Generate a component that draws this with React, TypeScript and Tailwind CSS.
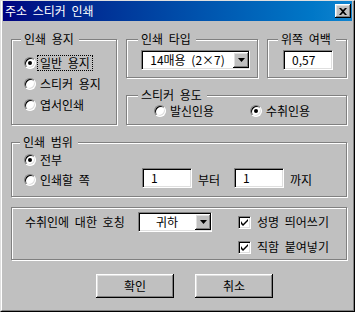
import type { ReactNode } from "react";

const raised =
  "bg-[#c0c0c0] shadow-[inset_-1px_-1px_0_#000,inset_1px_1px_0_#fff,inset_-2px_-2px_0_#808080,inset_2px_2px_0_#dfdfdf]";
const sunken =
  "bg-white border border-t-[#808080] border-l-[#808080] border-r-white border-b-white shadow-[inset_1px_1px_0_#000,inset_-1px_-1px_0_#dfdfdf]";

function Group({
  label,
  labelPos = "left-[10px]",
  className = "",
  children,
}: {
  label?: string;
  labelPos?: string;
  className?: string;
  children?: ReactNode;
}) {
  return (
    <div
      className={`relative border border-[#808080] shadow-[inset_1px_1px_0_#fff,1px_1px_0_#fff] ${className}`}
    >
      {label && (
        <span className={`absolute top-[-8px] bg-[#c0c0c0] pl-[3px] pr-[5px] leading-[14px] ${labelPos}`}>
          {label}
        </span>
      )}
      {children}
    </div>
  );
}

function Radio({ checked = false }: { checked?: boolean }) {
  return (
    <span
      className={`flex items-center justify-center w-3 h-3 shrink-0 rounded-full ${sunken}`}
    >
      {checked && <span className="block w-1 h-1 rounded-full bg-black" />}
    </span>
  );
}

function Check() {
  return (
    <span className={`flex items-center justify-center w-[13px] h-[13px] shrink-0 ${sunken}`}>
      <svg width="7" height="7" viewBox="0 0 7 7">
        <path d="M0 2v3l2 2l5-5V0L2 5z" fill="#000" />
      </svg>
    </span>
  );
}

function Arrow() {
  return (
    <span className={`flex items-center justify-center w-4 h-4 shrink-0 ${raised}`}>
      <svg width="7" height="4" viewBox="0 0 7 4">
        <polygon points="0,0 7,0 3.5,4" fill="#000" />
      </svg>
    </span>
  );
}

function Combo({ value, className }: { value: string; className: string }) {
  return (
    <div className={`flex items-center h-5 ${sunken} ${className}`}>
      <span className="flex-1 text-center">{value}</span>
      <Arrow />
    </div>
  );
}

function Edit({ value, className = "w-[50px]" }: { value: string; className?: string }) {
  return <div className={`flex items-center h-5 pl-[8px] ${sunken} ${className}`}>{value}</div>;
}

export default function App() {
  return (
    <div className="w-[355px] h-[312px] flex flex-col bg-[#c0c0c0] text-black text-[12px] leading-[14px] font-['Noto_Sans_CJK_KR',sans-serif] [word-spacing:3px] border border-t-[#dfdfdf] border-l-[#dfdfdf] border-r-black border-b-black">
      <div className="flex-1 flex flex-col border-l border-r border-b border-l-white border-r-[#808080] border-b-[#808080] px-px pb-px">
        {/* Title bar */}
        <div className="h-5 flex items-center justify-between pl-[2px] pr-[1px] bg-linear-to-r from-[#000080] to-[#1084d0] text-white">
          <span>주소 스티커 인쇄</span>
          <span className={`flex items-center justify-center w-4 h-[14px] ${raised}`}>
            <svg width="8" height="7" viewBox="0 0 8 7">
              <path d="M0 0h2l2 2l2-2h2L5 3.5L8 7H6L4 5L2 7H0l3-3.5z" fill="#000" />
            </svg>
          </span>
        </div>

        {/* Body */}
        <div className="flex-1 flex flex-col pl-[8px] pt-[18px]">
          <div className="flex gap-[9px]">
            <Group label="인쇄 용지" labelPos="left-[9px]" className="w-[106px] h-[86px] pl-[12px] pt-[12px]">
              <div className="flex items-center h-[21px]">
                <Radio checked />
                <span className="ml-[1px] px-[2px] border border-dotted border-black">일반 용지</span>
              </div>
              <div className="flex items-center h-[21px]">
                <Radio />
                <span className="ml-[1px] px-[2px] border border-transparent">스티커 용지</span>
              </div>
              <div className="flex items-center h-[21px]">
                <Radio />
                <span className="ml-[1px] px-[2px] border border-transparent">엽서인쇄</span>
              </div>
            </Group>

            <div className="w-[221px] flex flex-col gap-[17px]">
              <div className="flex gap-[9px]">
                <Group label="인쇄 타입" labelPos="left-[11px]" className="w-[132px] h-[39px] pl-[14px] pt-[10px]">
                  <Combo value="14매용 (2×7)" className="w-[109px]" />
                </Group>
                <Group label="위쪽 여백" labelPos="left-[10px]" className="w-[80px] h-[39px] pl-[15px] pt-[10px]">
                  <Edit value="0,57" />
                </Group>
              </div>
              <Group label="스티커 용도" labelPos="left-[11px]" className="h-[30px] pl-[27px] pt-[2px] flex items-center">
                <div className="w-[96px] flex items-center gap-[4px]">
                  <Radio />
                  <span>발신인용</span>
                </div>
                <div className="flex items-center gap-[4px]">
                  <Radio checked />
                  <span>수취인용</span>
                </div>
              </Group>
            </div>
          </div>

          <Group label="인쇄 범위" labelPos="left-[8px]" className="mt-[17px] w-[336px] h-[55px] pl-[12px] pt-[9px]">
            <div className="flex items-center h-4 gap-[4px]">
              <Radio checked />
              <span>전부</span>
            </div>
            <div className="flex items-center h-5">
              <div className="w-[118px] flex items-center gap-[4px] mt-[3px]">
                <Radio />
                <span>인쇄할 쪽</span>
              </div>
              <Edit value="1" />
              <span className="w-[42px] pl-[6px] mt-[3px]">부터</span>
              <Edit value="1" />
              <span className="pl-[6px] mt-[3px]">까지</span>
            </div>
          </Group>

          <Group className="mt-[10px] w-[336px] h-[53px] pl-[13px] pt-[4px] flex items-start">
            <div className="flex items-center h-5">
              <span className="w-[113px]">수취인에 대한 호칭</span>
              <Combo value="귀하" className="w-[74px]" />
            </div>
            <div className="ml-[26px] flex flex-col gap-[5px]">
              <div className="flex items-center h-5 gap-[6px]">
                <Check />
                <span>성명 띄어쓰기</span>
              </div>
              <div className="flex items-center h-5 gap-[6px]">
                <Check />
                <span>직함 붙여넣기</span>
              </div>
            </div>
          </Group>

          <div className="mt-[14px] pl-[85px] flex gap-[21px]">
            <button className={`w-[78px] h-6 flex items-center justify-center ${raised}`}>확인</button>
            <button className={`w-[78px] h-6 flex items-center justify-center ${raised}`}>취소</button>
          </div>
        </div>
      </div>
    </div>
  );
}
